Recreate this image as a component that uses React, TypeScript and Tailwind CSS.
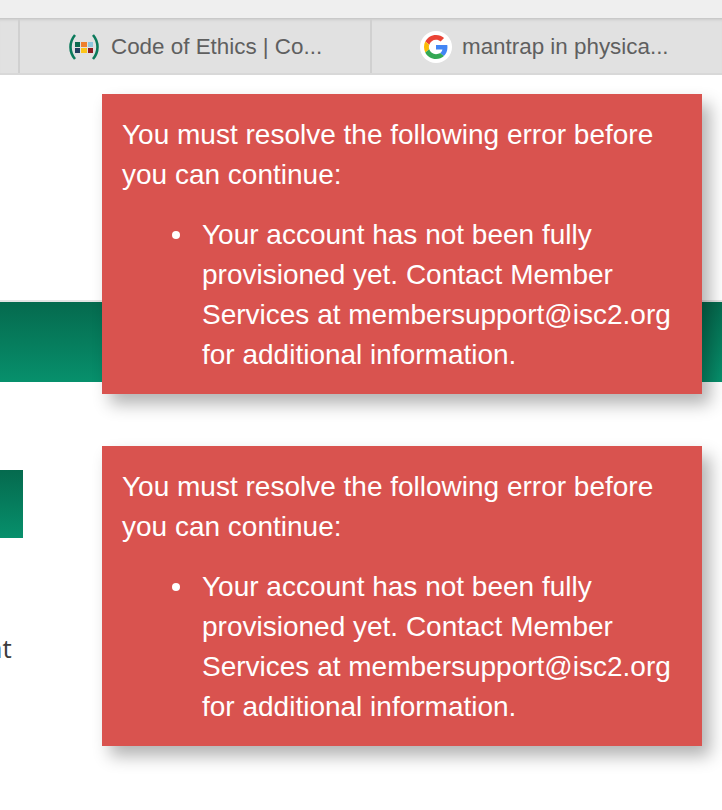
const green = "bg-gradient-to-b from-[#056a4e] to-[#07906c]";

function Toast() {
  return (
    <div className="w-[600px] h-[300px] bg-[#d9534f] text-white px-5 pt-[21px] shadow-[8px_10px_16px_rgba(0,0,0,0.3)] text-[28px] leading-[40px]">
      <p>You must resolve the following error before you can continue:</p>
      <ul className="pl-20 mt-5">
        <li className="relative list-none before:absolute before:left-[-30px] before:top-[16px] before:w-2 before:h-2 before:rounded-full before:bg-white">
          Your account has not been fully provisioned yet. Contact Member Services at membersupport@isc2.org for additional information.
        </li>
      </ul>
    </div>
  );
}

function IscLogo() {
  const cells = ["bg-[#0b6b4f]", "bg-[#ee7f2d]", "bg-[#8fc7de]", "bg-[#24405e]", "bg-[#fcc419]", "bg-[#8f1d21]"];
  return (
    <span className="relative w-[30px] h-[26px] flex items-center justify-center">
      <svg viewBox="0 0 30 26" className="absolute inset-0 w-full h-full" fill="none" stroke="#0b7a5b" strokeWidth="2.6">
        <path d="M6 1 C0 8 0 18 6 25" />
        <path d="M24 1 C30 8 30 18 24 25" />
      </svg>
      <span className="grid grid-cols-3 gap-px w-[18px]">
        {cells.map((c) => (
          <span key={c} className={`h-[5px] ${c}`} />
        ))}
      </span>
    </span>
  );
}

function GoogleLogo() {
  return (
    <span className="w-8 h-8 rounded-full bg-white flex items-center justify-center">
      <svg viewBox="0 0 48 48" className="w-6 h-6">
        <path fill="#EA4335" d="M24 9.5c3.5 0 6.7 1.2 9.2 3.6l6.9-6.9C35.9 2.4 30.5 0 24 0 14.6 0 6.5 5.4 2.6 13.2l8 6.2C12.4 13.700 17.7 9.5 24 9.5z" />
        <path fill="#4285F4" d="M46.9 24.5c0-1.6-.1-3.100-.4-4.500H24v9h12.900c-.6 3-2.200 5.500-4.800 7.200l7.700 6c4.500-4.200 7.100-10.300 7.100-17.700z" />
        <path fill="#FBBC05" d="M10.500 28.600c-.5-1.400-.8-3-.8-4.600s.3-3.200.8-4.600l-8-6.200C.9 16.500 0 20.100 0 24s.9 7.500 2.600 10.800l7.900-6.200z" />
        <path fill="#34A853" d="M24 48c6.500 0 11.900-2.100 15.900-5.800l-7.700-6c-2.200 1.400-4.900 2.300-8.200 2.300-6.300 0-11.600-4.200-13.500-9.900l-8 6.200C6.500 42.600 14.600 48 24 48z" />
      </svg>
    </span>
  );
}

export default function App() {
  return (
    <div className="relative w-[722px] h-[810px] overflow-hidden bg-white font-['Liberation_Sans',Arial,sans-serif]">
      <div className="h-[19px] bg-[#efefef] border-b border-[#c9c9c9]" />
      <div className="h-[56px] bg-[#e1e1e1] border-b-2 border-[#d8d8d8] flex text-[22.4px] text-[#5f5f5f] shadow-[inset_0_3px_3px_-2px_rgba(0,0,0,0.1)]">
        <div className="w-[20px] border-r-2 border-[#d0d0d0]" />
        <div className="w-[352px] border-r-2 border-[#d0d0d0] flex items-center gap-[12px] pl-[49px] pt-[2px]">
          <IscLogo />
          <span>Code of Ethics | Co...</span>
        </div>
        <div className="flex-1 flex items-center gap-[10px] pl-[48px] pt-[2px]">
          <GoogleLogo />
          <span>mantrap in physica...</span>
        </div>
      </div>

      <div className="mt-[225px] h-[82px] border-t-2 border-[#e4e4e4]">
        <div className={`h-[80px] ${green}`} />
      </div>
      <div className={`mt-[88px] w-[23px] h-[68px] ${green}`} />
      <div className="mt-[95px] -ml-[12px] text-[26px] leading-[30px] text-[#3c3c3c] font-['Open_Sans',sans-serif]">
        <span className="whitespace-nowrap">at</span>
      </div>

      <div className="absolute left-[102px] top-[94px] flex flex-col gap-[52px]">
        <Toast />
        <Toast />
      </div>
    </div>
  );
}
